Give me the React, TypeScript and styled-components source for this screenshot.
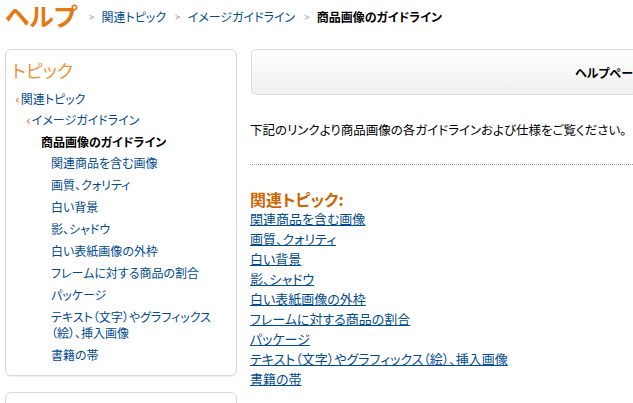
import styled, { createGlobalStyle } from "styled-components"

const GlobalStyle = createGlobalStyle`
  body {
    margin: 0;
    background: #fff;
    font-family: "Noto Sans CJK JP", "Noto Sans", sans-serif;
    font-feature-settings: "palt";
    overflow: hidden;
  }
`

const subTopics = [
  "関連商品を含む画像",
  "画質、クォリティ",
  "白い背景",
  "影、シャドウ",
  "白い表紙画像の外枠",
  "フレームに対する商品の割合",
  "パッケージ",
  "テキスト（文字）やグラフィックス\n（絵）、挿入画像",
  "書籍の帯",
]

export default function App() {
  return (
    <Page>
      <GlobalStyle />
      <Header>
        <Title>ヘルプ</Title>
        <Crumbs>
          <Sep>&gt;</Sep>
          <CrumbLink>関連トピック</CrumbLink>
          <Sep>&gt;</Sep>
          <CrumbLink>イメージガイドライン</CrumbLink>
          <Sep>&gt;</Sep>
          <CrumbCurrent>商品画像のガイドライン</CrumbCurrent>
        </Crumbs>
      </Header>

      <Columns>
        <Sidebar>
          <Panel>
            <PanelTitle>トピック</PanelTitle>
            <NavItem $indent={3} $pad={2}>
              <Chevron>‹</Chevron>関連トピック
            </NavItem>
            <NavItem $indent={14} $pad={2}>
              <Chevron>‹</Chevron>イメージガイドライン
            </NavItem>
            <NavCurrent>商品画像のガイドライン</NavCurrent>
            {subTopics.map((t) => (
              <NavItem key={t} $indent={39} $pad={3}>
                {t.split("\n").map((line, i) => (
                  <span key={i}>
                    {i > 0 && <br />}
                    {line}
                  </span>
                ))}
              </NavItem>
            ))}
          </Panel>
          <Panel $short />
        </Sidebar>

        <Main>
          <FeedbackBar>
            <FeedbackText>ヘルプページに関するご意見・ご感想</FeedbackText>
          </FeedbackBar>
          <Intro>下記のリンクより商品画像の各ガイドラインおよび仕様をご覧ください。</Intro>
          <Divider />
          <SectionTitle>関連トピック:</SectionTitle>
          <LinkList>
            {subTopics.map((t) => (
              <li key={t}>
                <TopicLink>{t.replace("\n", "")}</TopicLink>
              </li>
            ))}
          </LinkList>
        </Main>
      </Columns>
    </Page>
  )
}

//styled components
const Page = styled.div`
  width: 980px;
  padding: 0 0 0 5px;
`

const Header = styled.div`
  display: flex;
  align-items: center;
  height: 30px;
  margin-bottom: 19px;
`

const Title = styled.h1`
  margin: 0;
  font-size: 25px;
  line-height: 30px;
  font-weight: bold;
  color: #e47911;
`

const Crumbs = styled.div`
  display: flex;
  align-items: center;
  margin-left: 12px;
  padding-top: 4px;
  font-size: 12px;
  line-height: 16px;
`

const Sep = styled.span`
  color: #999;
  font-size: 10px;
  margin: 0 7px 0 0;
`

const CrumbLink = styled.a`
  color: #004b91;
  margin-right: 9px;
`

const CrumbCurrent = styled.span`
  color: #000;
  font-weight: bold;
`

const Columns = styled.div`
  display: flex;
  gap: 13px;
  align-items: flex-start;
`

const Sidebar = styled.div`
  display: flex;
  flex-direction: column;
  gap: 16px;
  width: 232px;
  flex-shrink: 0;
`

const Panel = styled.div<{ $short?: boolean }>`
  box-sizing: border-box;
  border: 1px solid #d8d8d8;
  border-radius: 6px;
  padding: 9px 6px 10px;
  height: ${(p) => (p.$short ? "60px" : "327px")};
  box-shadow: 0 1px 1px #eee;
`

const PanelTitle = styled.div`
  font-size: 18px;
  line-height: 22px;
  color: #e8963c;
  margin-bottom: 8px;
`

const NavItem = styled.div<{ $indent: number; $pad: number }>`
  font-size: 12px;
  line-height: 16px;
  padding: ${(p) => p.$pad}px 0 ${(p) => p.$pad}px ${(p) => p.$indent}px;
  color: #004b91;
`

const Chevron = styled.span`
  color: #e47911;
  font-family: "DejaVu Sans", sans-serif;
  font-size: 12px;
  margin-right: 1px;
`

const NavCurrent = styled.div`
  font-size: 12px;
  line-height: 16px;
  padding: 3px 0 2px 29px;
  font-weight: bold;
  color: #000;
`

const Main = styled.div`
  flex: 1;
`

const FeedbackBar = styled.div`
  box-sizing: border-box;
  height: 46px;
  margin-left: 1px;
  border: 1px solid #dcdcdc;
  border-radius: 5px;
  background: linear-gradient(#fff, #efefef);
  display: flex;
  align-items: center;
  padding-left: 323px;
`

const FeedbackText = styled.span`
  font-size: 12px;
  font-weight: bold;
  color: #000;
  white-space: nowrap;
`

const Intro = styled.p`
  margin: 26px 0 0;
  font-size: 12.5px;
  line-height: 18px;
  color: #000;
  white-space: nowrap;
`

const Divider = styled.div`
  margin-top: 25px;
  border-top: 1px dotted #999;
`

const SectionTitle = styled.h2`
  margin: 24px 0 0;
  font-size: 16px;
  line-height: 20px;
  font-weight: bold;
  color: #cc6600;
`

const LinkList = styled.ul`
  list-style: none;
  margin: 0;
  padding: 0;

  li {
    font-size: 13px;
    line-height: 20px;
  }
`

const TopicLink = styled.a`
  color: #004b91;
  text-decoration: underline;
`
